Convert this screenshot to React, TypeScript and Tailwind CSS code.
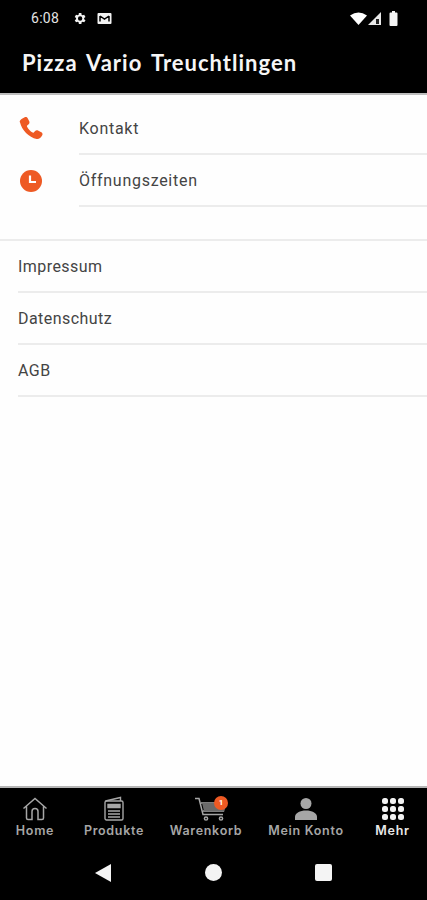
import React from 'react';

const geo = { fontFamily: 'Lato, "Open Sans", sans-serif' };

const NavItem = ({ label, icon, active }: { label: string; icon: React.ReactNode; active?: boolean }) => (
  <div className="flex flex-col items-center">
    <div className="h-[26px] flex items-end justify-center">{icon}</div>
    <span
      className={`mt-[2px] text-[12.5px] leading-[16px] font-semibold tracking-[0.7px] whitespace-nowrap font-['Inter',sans-serif] ${active ? 'text-[#e8e8e8]' : 'text-[#a6a6a6]'}`}
    >
      {label}
    </span>
  </div>
);

const ListRow = ({ label }: { label: string }) => (
  <div className="h-[52px] ml-[18px] flex items-center border-b-2 border-[#ececec] text-[16px] tracking-[0.45px] text-[#444444] pt-px">
    {label}
  </div>
);

const IconRow = ({ label, icon }: { label: string; icon: React.ReactNode }) => (
  <div className="flex h-[52px]">
    <div className="w-[79px] pl-[19px] flex items-center shrink-0">{icon}</div>
    <div className="flex-1 flex items-center border-b-2 border-[#ececec] text-[16px] tracking-[0.72px] text-[#444444] pt-[2px]">{label}</div>
  </div>
);

export default function App() {
  return (
    <div className="w-[427px] h-[900px] flex flex-col bg-[#fefefe] overflow-hidden font-['Roboto',sans-serif]">
      {/* status bar + title */}
      <div className="bg-black h-[95px] shrink-0 border-b-2 border-[#bdbdbd]">
        <div className="h-[36px] pl-[31px] pr-[29px] flex items-center justify-between text-[#e4e4e4]">
          <div className="flex items-center">
            <span className="text-[14px] leading-none w-[41px] tracking-[0.3px]">6:08</span>
            <svg width="15" height="15" viewBox="0 0 24 24" fill="#f2f2f2">
              <path d="M19.4 13a7.5 7.5 0 0 0 0-2l2.100-1.600-2-3.500-2.500 1a7.5 7.5 0 0 0-1.700-1L15 3.200h-4l-.4 2.700a7.500 7.500 0 0 0-1.700 1l-2.500-1-2 3.500L6.500 11a7.500 7.500 0 0 0 0 2l-2.100 1.600 2 3.500 2.500-1a7.500 7.500 0 0 0 1.700 1l.4 2.700h4l.4-2.700a7.500 7.500 0 0 0 1.700-1l2.500 1 2-3.500zM13 15.500a3.500 3.500 0 1 1 0-7 3.500 3.500 0 0 1 0 7z" />
            </svg>
            <svg width="15" height="13" viewBox="0 0 15 13" className="ml-[10px]">
              <rect x="0.5" y="1" width="14" height="11" rx="1" fill="#f2f2f2" />
              <path d="M3 4v5.500M12 4v5.500M3 4l4.500 3L12 4" stroke="#000" strokeWidth="1.500" fill="none" />
            </svg>
          </div>
          <div className="flex items-center">
            <svg width="17" height="13" viewBox="0 0 17 13">
              <path d="M0 3.500Q8.500-2.500 17 3.500L8.500 13z" fill="#fff" />
            </svg>
            <svg width="14" height="13" viewBox="0 0 14 13" className="ml-[1px]">
              <path d="M0 13L13 0v13z" fill="#e8e8e8" />
              <path d="M8 7h3v5H8z" fill="#222" />
            </svg>
            <svg width="9" height="15" viewBox="0 0 9 15" className="ml-[7px]">
              <path d="M3 0h3v1.500h1.500a1 1 0 0 1 1 1V14a1 1 0 0 1-1 1h-6a1 1 0 0 1-1-1V2.500a1 1 0 0 1 1-1H3z" fill="#f4f4f4" />
            </svg>
          </div>
        </div>
        <h1
          style={geo}
          className="pl-[22px] mt-[9px] text-[22px] leading-[36px] font-bold tracking-[1px] [word-spacing:3px] text-[#f6f6f6] whitespace-nowrap"
        >
          Pizza Vario Treuchtlingen
        </h1>
      </div>

      {/* content */}
      <div className="flex-1 pt-[8px]">
        <IconRow
          label="Kontakt"
          icon={
            <svg width="26" height="26" viewBox="1.500 1 22 22" fill="#ee5a24" className="-ml-[1px] mt-[1px]">
              <path d="M7.200 1.200c1-.6 2-.2 2.500.8l1.300 2.700c.4.900.2 1.700-.5 2.400L9.300 8.200c-.3.300-.3.600-.1 1 1 1.900 2.700 3.800 4.600 5 .4.200.7.200 1-.1l1.200-1.200c.7-.7 1.600-.8 2.400-.4l2.800 1.500c1 .5 1.300 1.600.8 2.500-1 2-2.800 3.400-4.700 3.100-6.500-1-12.800-8-14-13.700C1.900 4 4.500 2.600 7.200 1.200z" />
            </svg>
          }
        />
        <IconRow
          label="Öffnungszeiten"
          icon={
            <svg width="24" height="24" viewBox="0 0 24 24">
              <circle cx="12" cy="12" r="11" fill="#ee5a24" />
              <path d="M11 6.500v6.500h6" stroke="#fff" strokeWidth="2.200" fill="none" />
            </svg>
          }
        />

        <div className="mt-[32px] border-t-2 border-[#ececec]">
          <ListRow label="Impressum" />
          <ListRow label="Datenschutz" />
          <ListRow label="AGB" />
        </div>
      </div>

      {/* bottom nav */}
      <div className="bg-black h-[114px] shrink-0 border-t-2 border-[#b5b5b5]">
        <div className="h-[57px] pt-[7px] grid grid-cols-[70px_88px_96px_104px_69px]">
          <NavItem
            label="Home"
            icon={
              <svg width="26" height="24" viewBox="0 0 26 24" fill="none" stroke="#a6a6a6" strokeWidth="1.500">
                <path d="M1.500 11.500L13 1.500l11.500 10M4.500 9.500V21a1.500 1.500 0 0 0 1.500 1.500h4V14.500a3 3 0 0 1 6 0v8h4a1.500 1.500 0 0 0 1.500-1.500V9.500" />
              </svg>
            }
          />
          <NavItem
            label="Produkte"
            icon={
              <svg width="20" height="25" viewBox="0 0 20 25" fill="none" stroke="#a6a6a6" strokeWidth="1.400">
                <path d="M1.500 5l15-3.500V5" />
                <rect x="1" y="5" width="18" height="19" rx="1.500" />
                <path d="M4 8.500h12v3H4z" fill="#a6a6a6" />
                <path d="M4 15h12M4 18h12M4 21h12" />
              </svg>
            }
          />
          <NavItem
            label="Warenkorb"
            icon={
              <div className="relative ml-[10px]">
                <svg width="32" height="24" viewBox="0 0 32 24" fill="none" stroke="#a6a6a6" strokeWidth="1.500">
                  <path d="M0 1.500h4l4 16h20" />
                  <path d="M6 6h24l-1.500 8H8" />
                  <path d="M7 6h22v8H9z" fill="#6a6a6a" stroke="none" />
                  <circle cx="11" cy="21.500" r="1.600" />
                  <circle cx="26" cy="21.500" r="1.600" />
                </svg>
                <span className="absolute -top-[1px] -right-[1px] w-[14px] h-[14px] rounded-full bg-[#ee5a24] text-white text-[8px] leading-[14px] text-center font-bold">
                  1
                </span>
              </div>
            }
          />
          <NavItem
            label="Mein Konto"
            icon={
              <svg width="22" height="24" viewBox="0 0 22 24" fill="#a6a6a6">
                <circle cx="11" cy="6.500" r="5.500" />
                <path d="M0 23v-3c0-4 5-6.500 11-6.500S22 16 22 20v3z" />
              </svg>
            }
          />
          <NavItem
            active
            label="Mehr"
            icon={
              <svg width="22" height="22" viewBox="0 0 22 22" fill="#f2f2f2" className="mb-[1px]">
                {[3, 11, 19].flatMap((y) =>
                  [3, 11, 19].map((x) => <rect key={`${x}-${y}`} x={x - 3} y={y - 3} width="6" height="6" rx="2.500" />)
                )}
              </svg>
            }
          />
        </div>
        <div className="h-[55px] pl-[95px] pr-[95px] flex items-center justify-between">
          <svg width="17" height="18" viewBox="0 0 17 18">
            <path d="M0 9L16 0v18z" fill="#f4f4f4" />
          </svg>
          <div className="w-[17px] h-[17px] rounded-full bg-[#f4f4f4]" />
          <div className="w-[17px] h-[17px] rounded-[2px] bg-[#f4f4f4]" />
        </div>
      </div>
    </div>
  );
}
